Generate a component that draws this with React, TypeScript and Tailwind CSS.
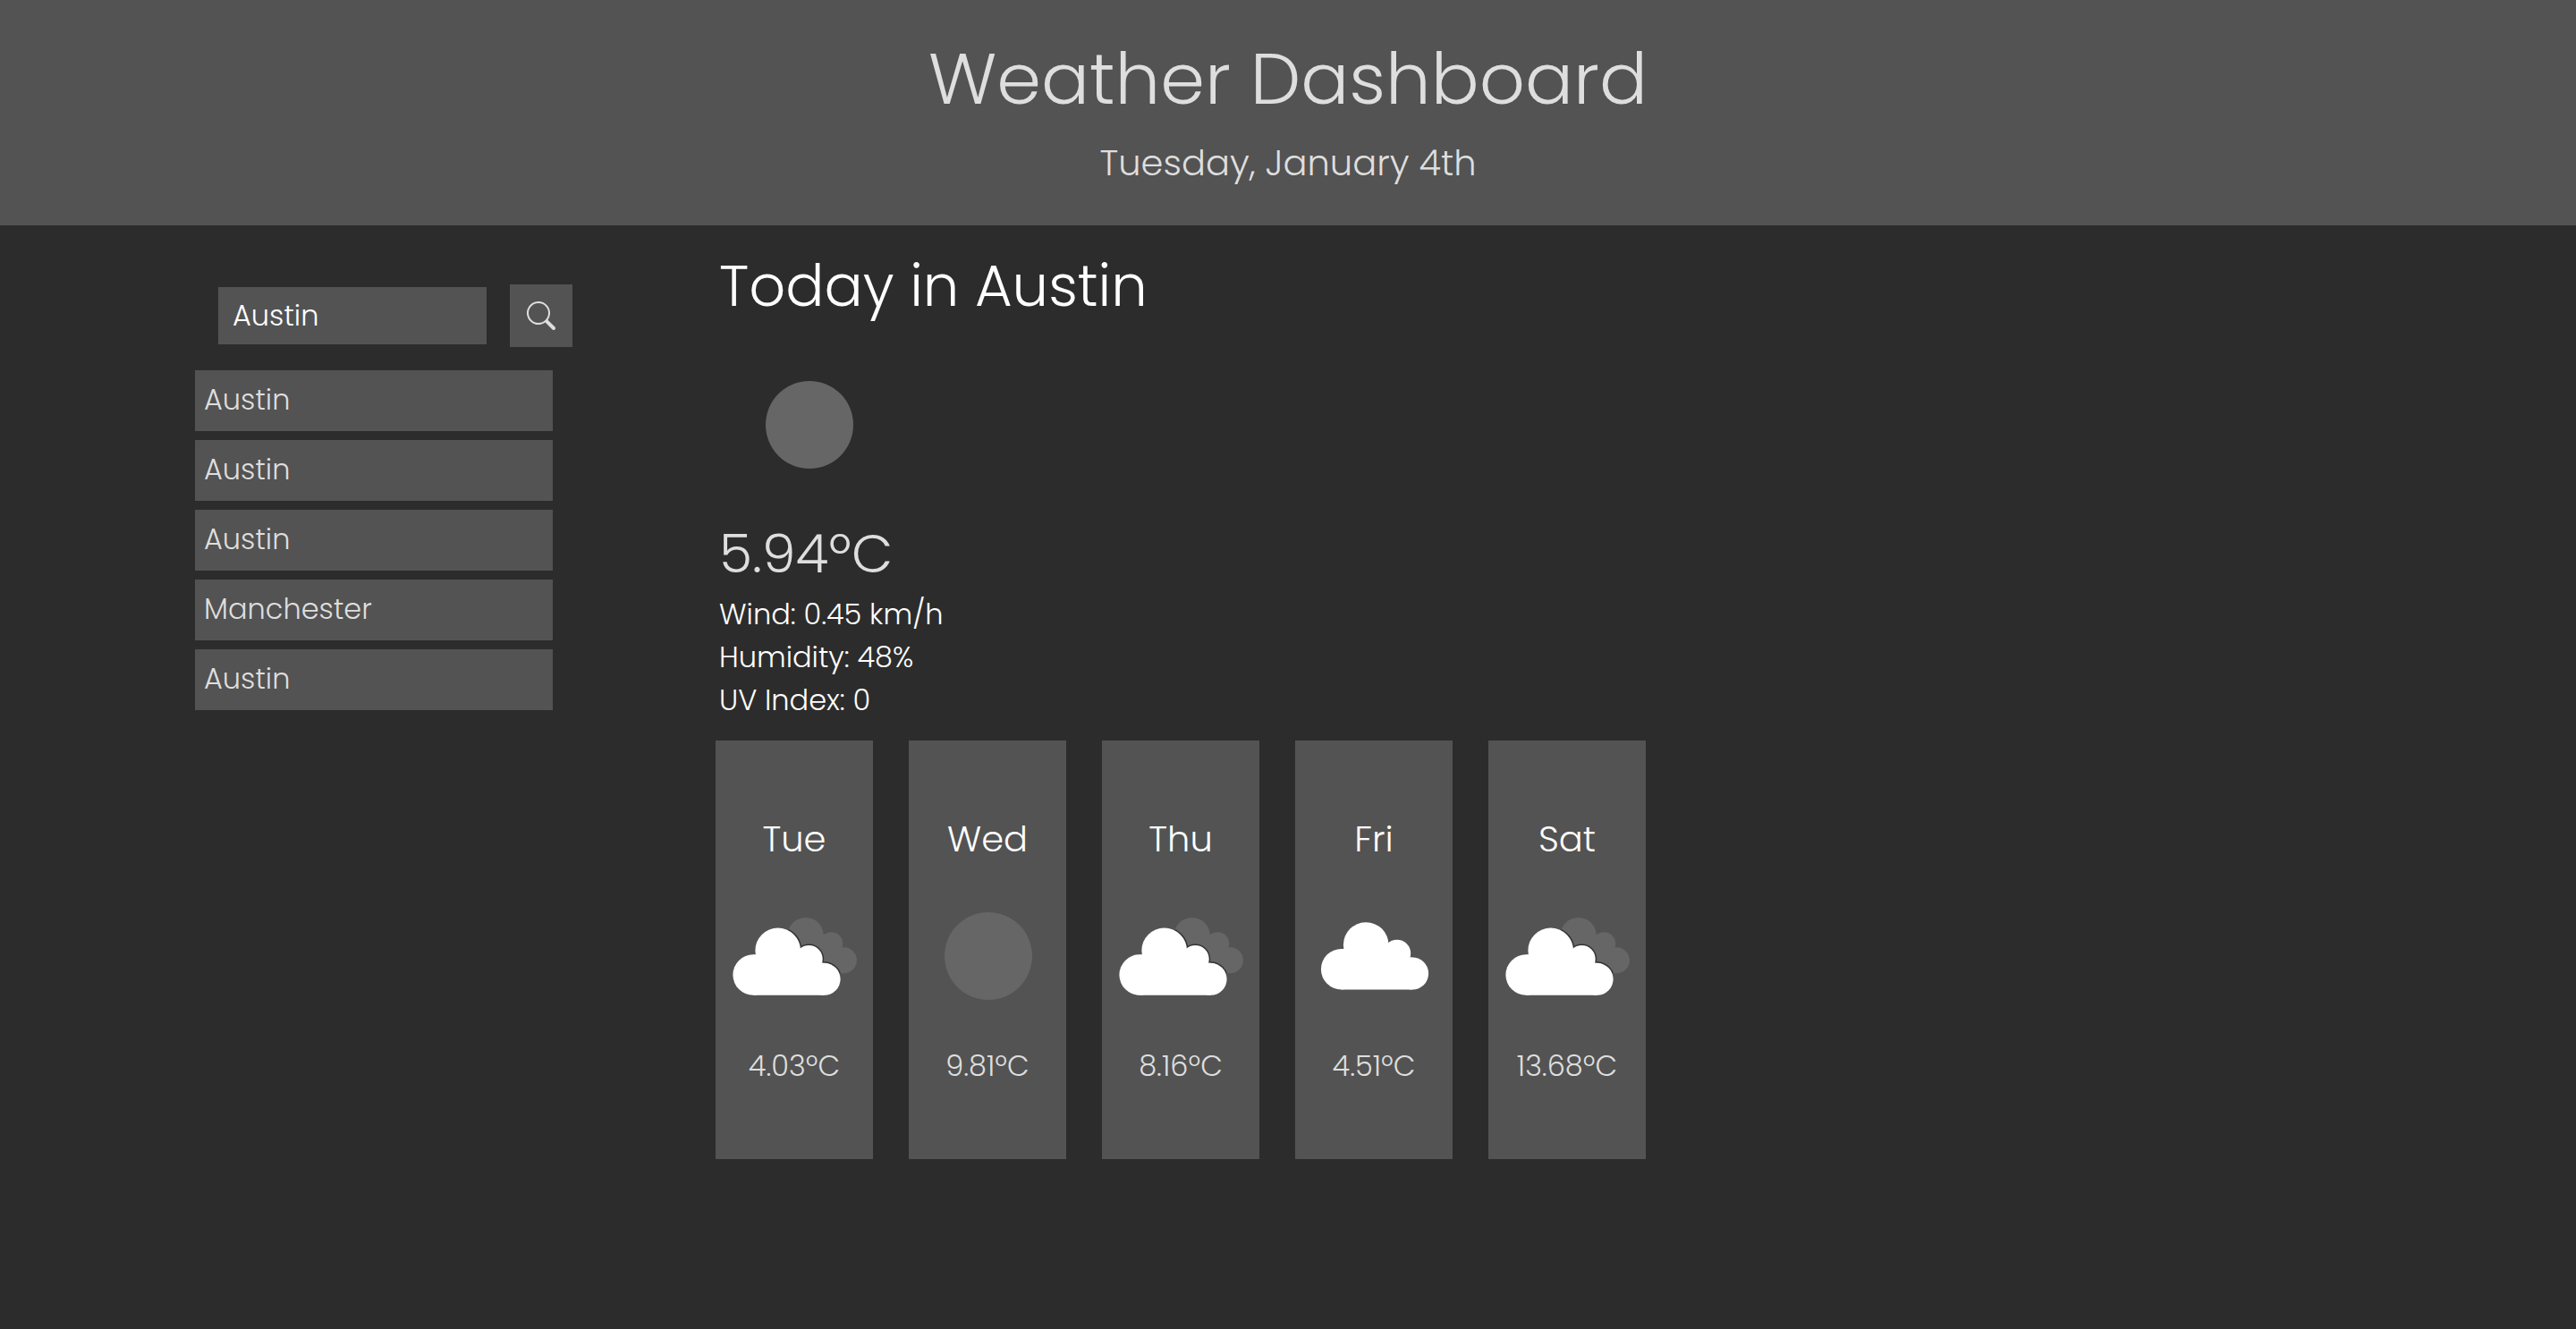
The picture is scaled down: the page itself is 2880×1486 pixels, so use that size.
import { useId, useState } from 'react';
import { BsSearch } from 'react-icons/bs';

type Condition = 'clear' | 'cloudy' | 'overcast';

const history = ['Austin', 'Austin', 'Austin', 'Manchester', 'Austin'];

const readings = ['Wind: 0.45 km/h', 'Humidity: 48%', 'UV Index: 0'];

const forecast: { day: string; condition: Condition; temp: string }[] = [
  { day: 'Tue', condition: 'overcast', temp: '4.03ºC' },
  { day: 'Wed', condition: 'clear', temp: '9.81ºC' },
  { day: 'Thu', condition: 'overcast', temp: '8.16ºC' },
  { day: 'Fri', condition: 'cloudy', temp: '4.51ºC' },
  { day: 'Sat', condition: 'overcast', temp: '13.68ºC' },
];

function FrontCloud() {
  return (
    <>
      <circle cx="54.2" cy="121" r="22.8" />
      <circle cx="81.7" cy="93.8" r="25.3" />
      <circle cx="116.4" cy="103.4" r="15.3" />
      <circle cx="133.6" cy="125.8" r="18" />
      <path d="M54.2 98.4H112V107.8H133.6V143.8H54.2Z" />
    </>
  );
}

function BackCloud() {
  return (
    <>
      <circle cx="112.7" cy="77" r="20" />
      <circle cx="141.4" cy="86" r="12.8" />
      <circle cx="155.4" cy="104.8" r="14.5" />
      <path d="M95 85L126 76L134 76L145 95L155.4 119.3H100Z" />
    </>
  );
}

function WeatherIcon({ condition }: { condition: Condition }) {
  const clip = useId();
  return (
    <svg
      viewBox="0 -1 200 200"
      className="size-[200px] shrink-0"
      role="img"
      aria-label={condition}
    >
      {condition === 'clear' && <circle cx="101" cy="100" r="49" fill="#666666" />}
      {condition === 'cloudy' && (
        <g fill="#ffffff" transform="translate(9.5 -6.3)">
          <FrontCloud />
        </g>
      )}
      {condition === 'overcast' && (
        <>
          <clipPath id={clip}>
            <BackCloud />
          </clipPath>
          <g fill="#666666">
            <BackCloud />
          </g>
          {/* dark rim where the front cloud overlaps the back one */}
          <g clipPath={`url(#${clip})`} fill="#333333" stroke="#333333" strokeWidth="3">
            <FrontCloud />
          </g>
          <g fill="#ffffff">
            <FrontCloud />
          </g>
        </>
      )}
    </svg>
  );
}

export default function App() {
  const [city, setCity] = useState('Austin');

  return (
    <div className="min-h-screen bg-[#2c2c2c] font-['Poppins',Inter,sans-serif] text-[32px] leading-[48px] font-light text-[#dedede]">
      <header className="bg-[#535353] pt-7 pb-10 text-center">
        <h1 className="text-[80px] leading-[120px]">Weather Dashboard</h1>
        <p className="mt-1 text-[40px] leading-[60px]">Tuesday, January 4th</p>
      </header>

      <div className="grid grid-cols-[5fr_13fr]">
        <aside className="pt-[66px] pl-[218px]">
          <form
            className="flex items-center gap-[26px] pl-[26px]"
            onSubmit={(e) => e.preventDefault()}
          >
            <input
              type="text"
              aria-label="City"
              value={city}
              onChange={(e) => setCity(e.target.value)}
              className="h-16 w-[300px] bg-[#535353] px-4 text-white outline-none"
            />
            <button
              type="submit"
              aria-label="Search"
              className="flex size-[70px] shrink-0 items-center justify-center bg-[#535353]"
            >
              <BsSearch className="size-8" />
            </button>
          </form>
          <ul className="mt-[26px] flex w-[400px] flex-col gap-2.5">
            {history.map((name, i) => (
              <li key={i}>
                <button
                  type="button"
                  onClick={() => setCity(name)}
                  className="block w-full bg-[#535353] px-2.5 pt-[9px] pb-[11px] text-left"
                >
                  {name}
                </button>
              </li>
            ))}
          </ul>
        </aside>

        <main className="pt-5">
          <section className="pl-1 text-white">
            <h2 className="text-[64px] leading-[96px]">Today in Austin</h2>
            <div className="mt-1.5">
              <WeatherIcon condition="clear" />
            </div>
            <p className="pt-px text-[60px] leading-[88px] text-[#dedede]">5.94ºC</p>
            {readings.map((line) => (
              <p key={line}>{line}</p>
            ))}
          </section>

          <section className="mt-[21px] flex flex-wrap gap-10">
            {forecast.map(({ day, condition, temp }) => (
              <article
                key={day}
                className="flex w-44 flex-col items-center bg-[#535353] py-20"
              >
                <h3 className="text-[40px] leading-[60px] text-white">{day}</h3>
                <WeatherIcon condition={condition} />
                <p>{temp}</p>
              </article>
            ))}
          </section>
        </main>
      </div>
    </div>
  );
}
